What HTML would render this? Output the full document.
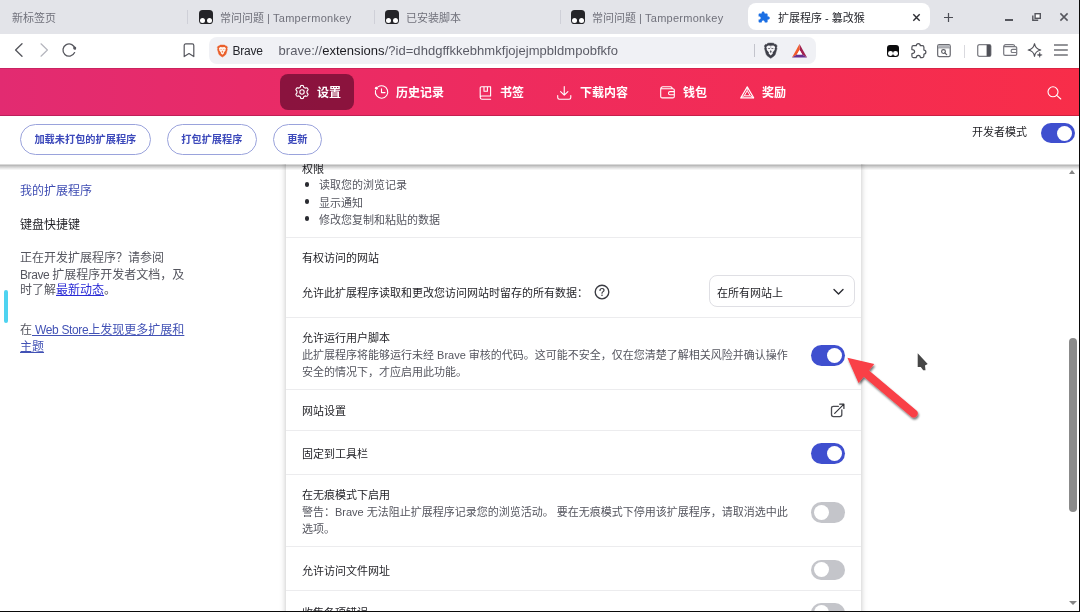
<!DOCTYPE html>
<html lang="zh-CN">
<head>
<meta charset="utf-8">
<title>扩展程序 - 篡改猴</title>
<style>
*{box-sizing:border-box;margin:0;padding:0}
html,body{width:1080px;height:612px;overflow:hidden;background:#fff}
body{position:relative;opacity:.999;font-family:"Liberation Sans","Noto Sans CJK SC",sans-serif;font-size:11px;color:#1d1d22;-webkit-font-smoothing:antialiased}
.abs{position:absolute}
.t{position:absolute;white-space:nowrap;line-height:16px}
svg{position:absolute;overflow:visible}
/* tab bar */
#tabbar{position:absolute;left:0;top:0;width:1080px;height:34px;background:#e3e4e9}
#tabbar .t{font-size:11px;color:#70717b;top:10px}
.sep{position:absolute;width:1px;background:#cfd0d8;top:10px;height:14px}
.tm{position:absolute;width:13.5px;height:13.8px;border-radius:3.6px;background:#242428}
.tm:before,.tm:after{content:"";position:absolute;bottom:1.3px;width:5.1px;height:5.1px;border-radius:50%;background:#fff}
.tm:before{left:1px}.tm:after{right:1px}
.tm.tb:before,.tm.tb:after{width:4.8px;height:4.8px;bottom:1.1px}.tm.tb:before{left:.9px}.tm.tb:after{right:.9px}
#acttab{position:absolute;left:747.7px;top:3.2px;width:182.8px;height:27.3px;background:#fff;border-radius:8px}
/* toolbar */
#toolbar{position:absolute;left:0;top:34px;width:1080px;height:34px;background:#fff}
#url{position:absolute;left:208.5px;top:3px;width:607.5px;height:27px;border-radius:8px;background:#f0f1f5}
/* nav */
#nav{position:absolute;left:0;top:68px;width:1080px;height:48px;background:linear-gradient(90deg,#e22b71 0%,#ee2b5f 45%,#f82d49 100%);box-shadow:inset 0 -1px 0 rgba(90,0,40,.28),inset 0 1px 0 rgba(90,0,40,.18)}
#nav .t{color:#fff;font-weight:bold;font-size:12px;top:16.5px}
#navsel{position:absolute;left:279.6px;top:5.6px;width:74.2px;height:36.8px;border-radius:8px;background:rgba(60,0,30,.55)}
/* dev bar */
#devbar{position:absolute;left:0;top:116px;width:1080px;height:48px;background:#fff;z-index:5}
#devbar:after{content:"";position:absolute;left:0;top:48px;width:1080px;height:7px;background:linear-gradient(180deg,rgba(0,0,0,.09) 0,rgba(0,0,0,.27) 1.5px,rgba(0,0,0,.2) 2.5px,rgba(0,0,0,.06) 5px,rgba(0,0,0,0) 6.5px)}
.pill{position:absolute;top:7.75px;height:31px;border:1px solid #9aa3dc;border-radius:15.5px;color:#3d4abb;font-weight:bold;font-size:10.2px;line-height:29px;text-align:center;white-space:nowrap}
/* content */
#content{position:absolute;left:0;top:162px;width:1080px;height:450px;background:#fff;overflow:hidden}
#card{position:absolute;left:286px;top:-20px;width:575px;height:500px;background:#fff;box-shadow:0 0 6px rgba(0,0,0,.25)}
.hr{position:absolute;left:286px;width:575px;height:1px;background:#ececee}
#content .t{font-size:11px;color:#1f1f24}
#content .g{color:#55565f}
#content .s{font-size:12px}
#content a{color:#2a2bd6;text-decoration:underline}
#content a.lk{color:#4252b5}
.dot{position:absolute;width:4.4px;height:4.4px;border-radius:50%;background:#2a2b31}
.tog{position:absolute;width:34px;height:20.5px;border-radius:10.5px}
.tog i{position:absolute;top:2.75px;width:15px;height:15px;border-radius:50%;background:#fff}
.tog.on{background:#3f4fcf}.tog.on i{right:2.75px}
.tog.off{background:#c4c5ca}.tog.off i{left:2.75px}
</style>
</head>
<body>
<div id="tabbar">
  <div class="t" style="left:12px">新标签页</div>
  <div class="sep" style="left:187px"></div>
  <div class="tm" style="left:199.1px;top:10.1px"></div>
  <div class="t" style="left:220px">常问问题 | <span style="letter-spacing:.27px">Tampermonkey</span></div>
  <div class="sep" style="left:374px"></div>
  <div class="tm" style="left:385.1px;top:10.1px"></div>
  <div class="t" style="left:406px">已安装脚本</div>
  <div class="sep" style="left:560px"></div>
  <div class="tm" style="left:571.1px;top:10.1px"></div>
  <div class="t" style="left:592px">常问问题 | <span style="letter-spacing:.27px">Tampermonkey</span></div>
  <div id="acttab"></div>
  <svg style="left:757px;top:11px" width="14" height="12" viewBox="0 0 14 12"><path d="M4.6 1.9 C4.6 1 5.3 .4 6.1 .4 C6.9 .4 7.6 1 7.6 1.9 L7.6 2.6 L9.6 2.6 C10.2 2.6 10.6 3 10.6 3.6 L10.6 5.4 L11.2 5.4 C12.1 5.4 12.8 6.1 12.8 6.9 C12.8 7.7 12.1 8.4 11.2 8.4 L10.6 8.4 L10.6 10.6 C10.6 11.2 10.2 11.6 9.6 11.6 L7.7 11.6 L7.7 11 C7.7 10.1 7 9.5 6.2 9.5 C5.4 9.5 4.7 10.1 4.7 11 L4.7 11.6 L2.6 11.6 C2 11.6 1.6 11.2 1.6 10.6 L1.6 8.5 L2.2 8.5 C3.1 8.5 3.7 7.8 3.7 7 C3.7 6.2 3.1 5.5 2.2 5.5 L1.6 5.5 L1.6 3.6 C1.6 3 2 2.6 2.6 2.6 L4.6 2.6 Z" fill="#1b6fe4"/></svg>
  <div class="t" style="left:778px;color:#25262c">扩展程序 - 篡改猴</div>
  <svg style="left:913px;top:13.5px" width="7" height="7" viewBox="0 0 7 7"><path d="M.3 .3 L6.7 6.7 M6.7 .3 L.3 6.7" stroke="#2c2d33" stroke-width="1.4" fill="none"/></svg>
  <svg style="left:943.5px;top:12.5px" width="9" height="9" viewBox="0 0 9 9"><path d="M4.5 0 V9 M0 4.5 H9" stroke="#4b4c54" stroke-width="1.2" fill="none"/></svg>
  <div class="abs" style="left:1004.5px;top:19.3px;width:8.5px;height:1.6px;background:#55565d"></div>
  <svg style="left:1031.5px;top:12.8px" width="9" height="8" viewBox="0 0 9 8"><rect x="3.1" y=".7" width="5.2" height="4.6" fill="#fff" stroke="#55565d" stroke-width="1.4"/><path d="M.8 2.4 V7.3 H6.2" stroke="#55565d" stroke-width="1.4" fill="none"/></svg>
  <svg style="left:1060px;top:13px" width="8" height="8" viewBox="0 0 8 8"><path d="M.4 .4 L7.6 7.6 M7.6 .4 L.4 7.6" stroke="#55565d" stroke-width="1.5" fill="none"/></svg>
</div>
<div id="toolbar">
  <svg style="left:14px;top:9px" width="10" height="14" viewBox="0 0 10 14"><path d="M8 .8 L1.6 7 L8 13.2" fill="none" stroke="#55565d" stroke-width="1.35" stroke-linecap="round" stroke-linejoin="round"/></svg>
  <svg style="left:39px;top:9px" width="10" height="14" viewBox="0 0 10 14"><path d="M2 .8 L8.4 7 L2 13.2" fill="none" stroke="#b4b5bd" stroke-width="1.2" stroke-linecap="round" stroke-linejoin="round"/></svg>
  <svg style="left:62px;top:9px" width="15" height="14" viewBox="0 0 15 14"><path d="M13.1 6.1 A6.1 6.1 0 1 0 12.6 9.6" fill="none" stroke="#55565d" stroke-width="1.3" stroke-linecap="round"/><circle cx="12.7" cy="5" r="1.55" fill="#55565d"/></svg>
  <svg style="left:183px;top:8.5px" width="12" height="15" viewBox="0 0 12 15"><path d="M1.2 2.4 C1.2 1.5 1.8 .9 2.7 .9 H9.3 C10.2 .9 10.8 1.5 10.8 2.4 V13.6 L6 10.6 L1.2 13.6 Z" fill="none" stroke="#55565d" stroke-width="1.2" stroke-linejoin="round"/></svg>
  <div id="url">
    <svg style="left:8.3px;top:7.8px" width="10.8" height="12.2" viewBox="0 0 22 25"><path d="M11 0 L6.2 .2 L4.2 2.2 L2.6 1.9 L.6 4.6 L1.5 7 L.9 9 L3.6 18.4 C4 19.7 5 20.7 6.2 21.5 L11 24.8 L15.8 21.5 C17 20.7 18 19.7 18.4 18.4 L21.1 9 L20.5 7 L21.4 4.6 L19.4 1.9 L17.8 2.2 L15.8 .2 Z" fill="#ea5f2b" stroke="#ea5f2b" stroke-width="1" stroke-linejoin="round"/><path d="M11 4.4 L6.6 3.9 L3.7 6.5 L4.7 9.6 L4.3 11 L8 15.4 L7.6 17 L11 20.2 L14.4 17 L14 15.4 L17.7 11 L17.3 9.6 L18.3 6.5 L15.4 3.9 Z" fill="#fff4ec"/><path d="M6.4 8.2 H9.6 L10.2 9.8 H7.2 Z M15.6 8.2 H12.4 L11.8 9.8 H14.8 Z" fill="#ea5f2b" opacity=".55"/><path d="M11 11.4 L9.3 13.8 L11 16.6 L12.7 13.8 Z" fill="#ea5f2b" opacity=".8"/></svg>
    <div class="t" style="left:24px;top:6px;font-size:12px;color:#25262c;letter-spacing:-.2px">Brave</div>
    <div class="t" id="urltxt" style="left:70px;top:5.5px;font-size:13px;letter-spacing:.035px;color:#5b5c66">brave://<span style="color:#1d1d22">extensions</span>/?id=dhdgffkkebhmkfjojejmpbldmpobfkfo</div>
    <div class="abs" style="left:545.5px;top:7px;width:1px;height:13px;background:#c3c4cc"></div>
    <svg style="left:555.5px;top:6px" width="13.5" height="15.5" viewBox="0 0 22 25"><path d="M11 0 L6.2 .2 L4.2 2.2 L2.6 1.9 L.6 4.6 L1.5 7 L.9 9 L3.6 18.4 C4 19.7 5 20.7 6.2 21.5 L11 24.8 L15.8 21.5 C17 20.7 18 19.7 18.4 18.4 L21.1 9 L20.5 7 L21.4 4.6 L19.4 1.9 L17.8 2.2 L15.8 .2 Z" fill="#3e3f49" stroke="#3e3f49" stroke-width=".8" stroke-linejoin="round"/><path d="M11 4.4 L6.6 3.9 L3.7 6.5 L4.7 9.6 L4.3 11 L8 15.4 L7.6 17 L11 20.2 L14.4 17 L14 15.4 L17.7 11 L17.3 9.6 L18.3 6.5 L15.4 3.9 Z" fill="#f4f4f7"/><path d="M6.2 8 H9.6 L10.2 9.8 H7.2 Z M15.8 8 H12.4 L11.8 9.8 H14.8 Z" fill="#3e3f49" opacity=".7"/><path d="M11 11.2 L9.4 13.8 L11 16.4 L12.6 13.8 Z" fill="#3e3f49" opacity=".85"/><path d="M11 4.4 V8" stroke="#3e3f49" stroke-width=".9" opacity=".6"/></svg>
    <svg style="left:583.5px;top:6.8px" width="15" height="13.5" viewBox="0 0 15 13.5"><path d="M7.5 0 L15 13.5 L10.3 10.6 L7.6 6 Z" fill="#a1214f"/><path d="M7.5 0 L0 13.5 L4.9 10.6 L7.6 6 Z" fill="#f2592a"/><path d="M0 13.5 H15 L10.3 10.6 H4.9 Z" fill="#67308f"/><path d="M7.6 6 L10.3 10.6 H4.9 Z" fill="#fff"/></svg>
  </div>
  <div class="tm tb" style="left:887px;top:11px;width:12px;height:12px;border-radius:3px;background:#0c0c0e"></div>
  <svg style="left:911px;top:8.5px" width="16" height="16" viewBox="0 0 16 16"><path d="M2.4 2.7 H5.3 A2 2.1 0 0 1 9.3 2.7 H11.4 Q12.9 2.7 12.9 4.2 V7.1 A2 2 0 0 1 12.9 11.1 V13.1 Q12.9 14.6 11.4 14.6 H9.4 A2.05 2.3 0 0 0 5.3 14.6 H2.4 Q.9 14.6 .9 13.1 V10.7 A2.7 2.05 0 0 0 .9 6.6 V4.2 Q.9 2.7 2.4 2.7 Z" fill="none" stroke="#505158" stroke-width="1.2" stroke-linejoin="round"/></svg>
  <svg style="left:936.8px;top:10px" width="14" height="13.4" viewBox="0 0 14 13.4"><rect x=".65" y=".65" width="12.6" height="12" rx="1.6" fill="none" stroke="#6c6d73" stroke-width="1.25"/><rect x="1.2" y="1.2" width="11.5" height="2.4" fill="#b1b3b9"/><path d="M.7 3.9 H13.2" stroke="#8a8b91" stroke-width=".9"/><circle cx="6.5" cy="7.6" r="1.9" fill="none" stroke="#5a5b61" stroke-width="1.15"/><path d="M7.9 9 L9.7 10.6" stroke="#5a5b61" stroke-width="1.2" stroke-linecap="round"/></svg>
  <div class="abs" style="left:963.5px;top:10.5px;width:1px;height:13px;background:#d9d9de"></div>
  <svg style="left:977px;top:9.5px" width="14.5" height="13" viewBox="0 0 14.5 13"><rect x=".7" y=".7" width="13.1" height="11.6" rx="1.6" fill="none" stroke="#808187" stroke-width="1.3"/><path d="M9.6 .7 H12.2 C13.1 .7 13.8 1.4 13.8 2.3 V10.7 C13.8 11.6 13.1 12.3 12.2 12.3 H9.6 Z" fill="#4f5057"/></svg>
  <svg style="left:1003px;top:10px" width="14.5" height="12" viewBox="0 0 14.5 12"><path d="M.7 2.6 V10 C.7 10.8 1.3 11.4 2.1 11.4 H12.3 C13.1 11.4 13.7 10.8 13.7 10 V4 C13.7 3.2 13.1 2.6 12.3 2.6 Z M.7 2.8 C.7 1.6 1.5 .7 2.7 .7 H10 C11.1 .7 11.7 1.4 11.7 2.6" fill="none" stroke="#77787f" stroke-width="1.2" stroke-linejoin="round"/><path d="M13.7 5.3 H9.6 C8.7 5.3 8.1 6 8.1 6.9 C8.1 7.8 8.7 8.5 9.6 8.5 H13.7" fill="none" stroke="#77787f" stroke-width="1.2"/></svg>
  <svg style="left:1028px;top:8.5px" width="15" height="15" viewBox="0 0 15 15"><path d="M6.5 .7 C7.1 4.5 9 6.4 12.8 7 C9 7.6 7.1 9.5 6.5 13.3 C5.9 9.5 4 7.6 .2 7 C4 6.4 5.9 4.5 6.5 .7 Z" fill="none" stroke="#505158" stroke-width="1.15" stroke-linejoin="round"/><path d="M11.7 9.4 C11.9 11.1 12.5 11.7 14.2 11.9 C12.5 12.1 11.9 12.7 11.7 14.4 C11.5 12.7 10.9 12.1 9.2 11.9 C10.9 11.7 11.5 11.1 11.7 9.4 Z" fill="#505158" stroke="#505158" stroke-width=".5" stroke-linejoin="round"/></svg>
  <svg style="left:1053.5px;top:10px" width="14" height="12" viewBox="0 0 14 12"><path d="M0 .9 H13.8 M0 5.9 H13.8 M0 11 H13.8" stroke="#707177" stroke-width="1.45" fill="none"/></svg>
</div>
<div id="nav">
  <div id="navsel"></div>
  <svg style="left:294.5px;top:17px" width="14" height="14" viewBox="0 0 14 14"><path d="M7.00 0.40 L7.58 0.43 L8.13 0.58 L8.50 1.40 L8.74 2.23 L9.11 2.47 L9.50 2.67 L9.87 2.90 L10.27 3.11 L11.10 2.90 L11.99 2.81 L12.41 3.21 L12.72 3.70 L12.98 4.21 L13.13 4.77 L12.60 5.50 L12.00 6.12 L11.98 6.56 L12.00 7.00 L11.98 7.44 L12.00 7.88 L12.60 8.50 L13.13 9.23 L12.98 9.79 L12.72 10.30 L12.41 10.79 L11.99 11.19 L11.10 11.10 L10.27 10.89 L9.87 11.10 L9.50 11.33 L9.11 11.53 L8.74 11.77 L8.50 12.60 L8.13 13.42 L7.58 13.57 L7.00 13.60 L6.42 13.57 L5.87 13.42 L5.50 12.60 L5.26 11.77 L4.89 11.53 L4.50 11.33 L4.13 11.10 L3.73 10.89 L2.90 11.10 L2.01 11.19 L1.59 10.79 L1.28 10.30 L1.02 9.79 L0.87 9.23 L1.40 8.50 L2.00 7.88 L2.02 7.44 L2.00 7.00 L2.02 6.56 L2.00 6.12 L1.40 5.50 L0.87 4.77 L1.02 4.21 L1.28 3.70 L1.59 3.21 L2.01 2.81 L2.90 2.90 L3.73 3.11 L4.13 2.90 L4.50 2.67 L4.89 2.47 L5.26 2.23 L5.50 1.40 L5.87 0.58 L6.42 0.43 Z" fill="none" stroke="#fff" stroke-width="1.1" stroke-linejoin="round"/><circle cx="7" cy="7" r="2.2" fill="none" stroke="#fff" stroke-width="1.1"/></svg>
  <div class="t" style="left:317px">设置</div>
  <svg style="left:373.5px;top:17px" width="14.5" height="14.5" viewBox="0 0 14.5 14.5"><path d="M4 1.9 A6.2 6.2 0 1 1 1.5 5.6" fill="none" stroke="#fff" stroke-width="1.1" stroke-linecap="round"/><circle cx="2.4" cy="3.3" r="1.45" fill="#fff"/><path d="M7.5 3.8 V7.6 H11" fill="none" stroke="#fff" stroke-width="1.1" stroke-linecap="round" stroke-linejoin="round"/></svg>
  <div class="t" style="left:396px">历史记录</div>
  <svg style="left:478.5px;top:17.5px" width="13" height="14" viewBox="0 0 13 14"><path d="M1.2 11.6 V2 C1.2 1.2 1.7 .7 2.5 .7 H11.6 V10 H2.8 C1.9 10 1.2 10.7 1.2 11.6 C1.2 12.5 1.9 13.2 2.8 13.2 H11.6" fill="none" stroke="#fff" stroke-width="1.1" stroke-linejoin="round" stroke-linecap="round"/><path d="M5 .9 V5.2 H8.4 V.9" fill="none" stroke="#fff" stroke-width="1.1" stroke-linejoin="round"/></svg>
  <div class="t" style="left:500px">书签</div>
  <svg style="left:557px;top:17.5px" width="14.5" height="14" viewBox="0 0 14.5 14"><path d="M7.25 .6 V9 M3.6 5.6 L7.25 9.2 L10.9 5.6" fill="none" stroke="#fff" stroke-width="1.1" stroke-linecap="round" stroke-linejoin="round"/><path d="M.7 9.6 V11.6 C.7 12.6 1.4 13.3 2.4 13.3 H12.1 C13.1 13.3 13.8 12.6 13.8 11.6 V9.6" fill="none" stroke="#fff" stroke-width="1.1" stroke-linecap="round"/></svg>
  <div class="t" style="left:580px">下载内容</div>
  <svg style="left:660px;top:18px" width="15" height="12.5" viewBox="0 0 15 12.5"><path d="M.7 2.8 V10.4 C.7 11.3 1.3 11.9 2.2 11.9 H12.8 C13.7 11.9 14.3 11.3 14.3 10.4 V4.3 C14.3 3.4 13.7 2.8 12.8 2.8 Z M.7 3 C.7 1.6 1.6 .7 2.9 .7 H10.4 C11.5 .7 12.2 1.5 12.2 2.8" fill="none" stroke="#fff" stroke-width="1.1" stroke-linejoin="round"/><path d="M14.3 5.6 H10 C9.1 5.6 8.5 6.3 8.5 7.2 C8.5 8.1 9.1 8.8 10 8.8 H14.3" fill="none" stroke="#fff" stroke-width="1.1"/></svg>
  <div class="t" style="left:683px">钱包</div>
  <svg style="left:740px;top:18px" width="14.5" height="12.5" viewBox="0 0 14.5 12.5"><path d="M7.25 .9 L13.7 11.9 H.8 Z" fill="none" stroke="#fff" stroke-width="1.1" stroke-linejoin="round"/><path d="M7.25 4.6 L10.3 9.8 H4.2 Z" fill="none" stroke="#fff" stroke-width="1" stroke-linejoin="round"/><path d="M7.25 .9 V4.6 M.8 11.9 L4.2 9.8 M13.7 11.9 L10.3 9.8" stroke="#fff" stroke-width=".9"/></svg>
  <div class="t" style="left:762px">奖励</div>
  <svg style="left:1046.5px;top:18px" width="15" height="14" viewBox="0 0 15 14"><circle cx="6" cy="5.8" r="5" fill="none" stroke="#fff" stroke-width="1.1"/><path d="M9.7 9.4 L13.8 13" stroke="#fff" stroke-width="1.1" stroke-linecap="round"/></svg>
</div>
<div id="devbar">
  <div class="pill" style="left:20px;width:130.7px">加载未打包的扩展程序</div>
  <div class="pill" style="left:167px;width:89.7px">打包扩展程序</div>
  <div class="pill" style="left:273px;width:48.7px">更新</div>
  <div class="t" style="left:972px;top:8px;font-size:11px;color:#1d1d22">开发者模式</div>
  <div class="tog on" style="left:1041px;top:6.8px"><i></i></div>
</div>
<div id="content">
  <div id="card"></div>
  <!-- sidebar -->
  <div class="t s" style="left:20px;top:21px;color:#3f4db3">我的扩展程序</div>
  <div class="t s" style="left:20px;top:54.5px">键盘快捷键</div>
  <div class="t s g" style="left:20px;top:88px">正在开发扩展程序？请参阅</div>
  <div class="t s g" style="left:20px;top:105px"><span style="letter-spacing:-.4px">Brave </span>扩展程序开发者文档，及</div>
  <div class="t s g" style="left:20px;top:120px">时了解<a>最新动态</a>。</div>
  <div class="abs" style="left:4px;top:128px;width:4px;height:33px;border-radius:2px;background:#4ed3f0"></div>
  <div class="t s g" style="left:20px;top:160px">在<a class="lk"><span style="letter-spacing:-.35px"> Web Store</span>上发现更多扩展和</a></div>
  <div class="t s g" style="left:20px;top:177px"><a class="lk">主题</a></div>
  <!-- card rows -->
  <div class="t" style="left:302px;top:-1.5px">权限</div>
  <div class="dot" style="left:305px;top:20.2px"></div>
  <div class="t g" style="left:319px;top:15px">读取您的浏览记录</div>
  <div class="dot" style="left:305px;top:37.2px"></div>
  <div class="t g" style="left:319px;top:33px">显示通知</div>
  <div class="dot" style="left:305px;top:54.2px"></div>
  <div class="t g" style="left:319px;top:50px">修改您复制和粘贴的数据</div>
  <div class="hr" style="top:75px"></div>
  <div class="t" style="left:302px;top:87.5px">有权访问的网站</div>
  <div class="t" style="left:302px;top:122.5px">允许此扩展程序读取和更改您访问网站时留存的所有数据：</div>
  <svg style="left:594px;top:122px" width="16" height="16" viewBox="0 0 16 16"><circle cx="8" cy="8" r="6.8" fill="none" stroke="#3a3b42" stroke-width="1.35"/><path d="M6 6.4 C6 5.2 6.9 4.5 8 4.5 C9.1 4.5 10 5.2 10 6.3 C10 7.6 8 7.7 8 9.2" fill="none" stroke="#3a3b42" stroke-width="1.2" stroke-linecap="round"/><circle cx="8" cy="11.2" r="0.8" fill="#3a3b42"/></svg>
  <div class="abs" style="left:709px;top:113px;width:146px;height:32px;border:1px solid #dfdfe4;border-radius:8px"></div>
  <div class="t" style="left:717px;top:122.5px">在所有网站上</div>
  <svg style="left:833px;top:125.8px" width="11" height="8" viewBox="0 0 11 8"><path d="M1 1.5 L5.5 6 L10 1.5" fill="none" stroke="#2a2b31" stroke-width="1.4" stroke-linecap="round" stroke-linejoin="round"/></svg>
  <div class="hr" style="top:155px"></div>
  <div class="t" style="left:302px;top:168px">允许运行用户脚本</div>
  <div class="t g" style="left:302px;top:185px">此扩展程序将能够运行未经 Brave 审核的代码。这可能不安全，仅在您清楚了解相关风险并确认操作</div>
  <div class="t g" style="left:302px;top:202px">安全的情况下，才应启用此功能。</div>
  <div class="tog on" style="left:810.6px;top:183px"><i></i></div>
  <div class="hr" style="top:227px"></div>
  <div class="t" style="left:302px;top:241px">网站设置</div>
  <svg style="left:830px;top:241px" width="16" height="16" viewBox="0 0 16 16"><path d="M8.4 3.3 H3.5 Q1.5 3.3 1.5 5.3 V11.6 Q1.5 13.6 3.5 13.6 H9.8 Q11.8 13.6 11.8 11.6 V6.8" fill="none" stroke="#4b4c52" stroke-width="1.3" stroke-linecap="round"/><path d="M4.7 10.4 L13.7 1.4 M9.7 1.2 H13.9 V5.4" fill="none" stroke="#33343a" stroke-width="1.2" stroke-linecap="round" stroke-linejoin="round"/></svg>
  <div class="hr" style="top:268px"></div>
  <div class="t" style="left:302px;top:284px">固定到工具栏</div>
  <div class="tog on" style="left:811px;top:281px"><i></i></div>
  <div class="hr" style="top:312px"></div>
  <div class="t" style="left:302px;top:325px">在无痕模式下启用</div>
  <div class="t g" style="left:302px;top:341.5px">警告：Brave 无法阻止扩展程序记录您的浏览活动。 要在无痕模式下停用该扩展程序，请取消选中此</div>
  <div class="t g" style="left:302px;top:358.5px">选项。</div>
  <div class="tog off" style="left:811px;top:340px"><i></i></div>
  <div class="hr" style="top:384px"></div>
  <div class="t" style="left:302px;top:400.5px">允许访问文件网址</div>
  <div class="tog off" style="left:811px;top:397.5px"><i></i></div>
  <div class="hr" style="top:428px"></div>
  <div class="t" style="left:302px;top:443px">收集各项错误</div>
  <div class="tog off" style="left:811px;top:440.5px"><i></i></div>
  <!-- scrollbar -->
  <div class="abs" style="left:1069px;top:175.8px;width:7.7px;height:174px;border-radius:4px;background:#8b8b8b"></div>
  <div class="abs" style="left:1068.9px;top:8px;border:3.8px solid transparent;border-top:0;border-bottom:4.3px solid #858585"></div>
  <div class="abs" style="left:1068.9px;top:438.8px;border:4px solid transparent;border-bottom:0;border-top:4.3px solid #858585"></div>
</div>
<svg style="left:830px;top:340px;z-index:8" width="110" height="100" viewBox="830 340 110 100"><defs><filter id="ds" x="-20%" y="-20%" width="150%" height="150%"><feGaussianBlur in="SourceAlpha" stdDeviation="1.2"/><feOffset dx="1.2" dy="2"/><feComponentTransfer><feFuncA type="linear" slope=".55"/></feComponentTransfer><feMerge><feMergeNode/><feMergeNode in="SourceGraphic"/></feMerge></filter></defs><g filter="url(#ds)"><path d="M847.4 357.8 L874.3 364 L869 370.4 L916.2 410.2 A4 4 0 0 1 911 416.4 L863.8 376.7 L858.5 383.1 Z" fill="#f93f46"/></g></svg>
<svg style="left:917px;top:352px;z-index:8" width="12" height="19" viewBox="917 352 12 19"><path d="M917.7 353.3 L927.7 364 L925 365.4 L925.5 370.2 L923.2 370.2 L920.8 366.9 L917.7 367 Z" fill="#464646"/></svg>
<div class="abs" style="left:1078.6px;top:0;width:1.4px;height:612px;background:#0a0a0a;z-index:9"></div>
<div class="abs" style="left:0;top:610.8px;width:1080px;height:1.2px;background:#0a0a0a;z-index:9"></div>
</body>
</html>
